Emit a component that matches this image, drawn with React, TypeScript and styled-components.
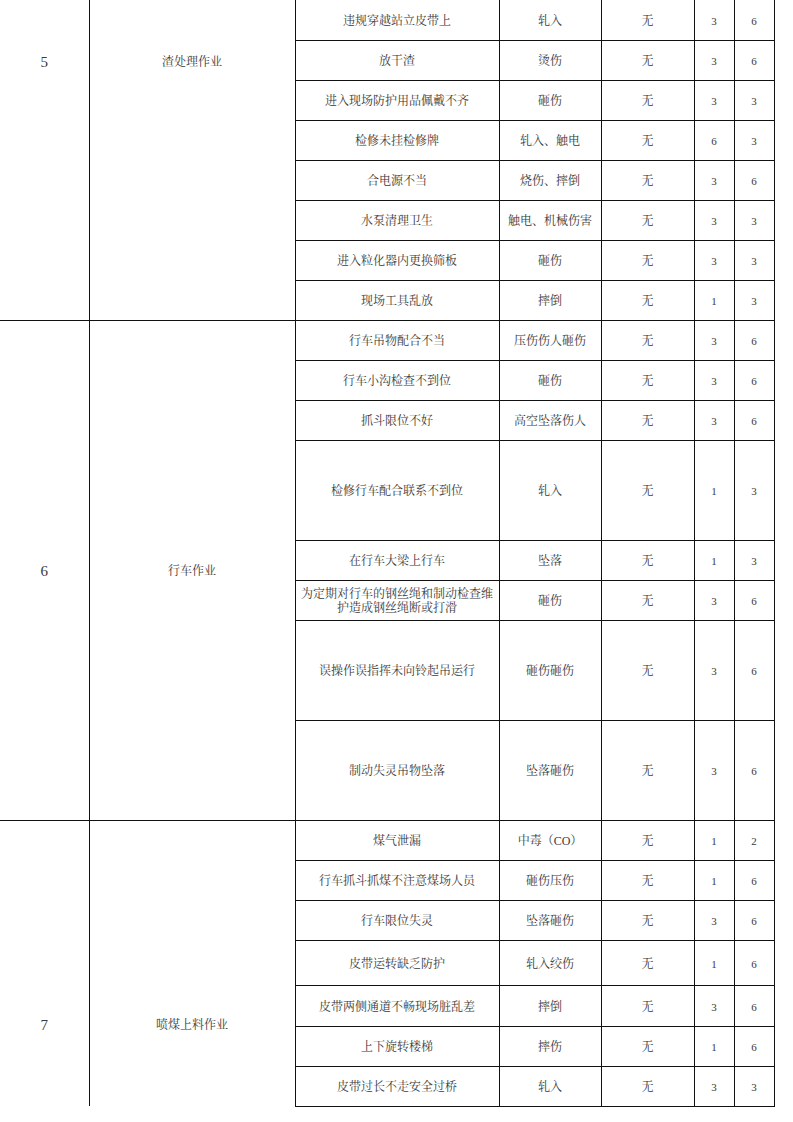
import React from "react";
import styled, { createGlobalStyle } from "styled-components";

const GlobalStyle = createGlobalStyle`
  html, body { margin: 0; padding: 0; background: #fff; }
  body {
    width: 793px;
    height: 1122px;
    overflow: hidden;
    font-family: "Liberation Serif", "Noto Serif CJK SC", "Noto Sans CJK SC", serif;
  }
`;

const Page = styled.div`
  width: 793px;
  height: 1122px;
  overflow: hidden;
  background: #fff;
`;

const Table = styled.table`
  border-collapse: collapse;
  table-layout: fixed;
  width: 774px;
  color: #3a3a3a;
`;

const Col = styled.col<{ $w: number }>`
  width: ${(p) => p.$w}px;
`;

const Row = styled.tr<{ $h: number }>`
  height: ${(p) => p.$h}px;
`;

const Cell = styled.td<{ $noTop?: boolean }>`
  border: 1px solid #111;
  ${(p) => (p.$noTop ? "border-top: none;" : "")}
  text-align: center;
  vertical-align: middle;
  padding: 2px 4px 0;
  font-size: 12px;
  line-height: 14px;
  font-family: "Liberation Serif", "Noto Serif CJK SC", "Noto Sans CJK SC", serif;
  word-break: break-all;
`;

const NumCell = styled(Cell)`
  font-size: 11px;
  padding: 2px 0 0;
`;

const GroupCell = styled(Cell)<{ $top?: number; $last?: boolean }>`
  vertical-align: ${(p) => (p.$top !== undefined ? "top" : "middle")};
  padding-top: ${(p) => (p.$top !== undefined ? `${p.$top}px` : "2px")};
  ${(p) => (p.$last ? "border-bottom: none;" : "")}
`;

const IndexCell = styled(GroupCell)`
  border-left: none;
  font-size: 15px;
  line-height: 18px;
`;

type Item = [string, string, string, number, number, number];

type Group = {
  no: string;
  name: string;
  top?: number;
  first?: boolean;
  last?: boolean;
  items: Item[];
};

const groups: Group[] = [
  {
    no: "5",
    name: "渣处理作业",
    top: 53,
    first: true,
    items: [
      ["违规穿越站立皮带上", "轧入", "无", 3, 6, 40],
      ["放干渣", "烫伤", "无", 3, 6, 40],
      ["进入现场防护用品佩戴不齐", "砸伤", "无", 3, 3, 40],
      ["检修未挂检修牌", "轧入、触电", "无", 6, 3, 40],
      ["合电源不当", "烧伤、摔倒", "无", 3, 6, 40],
      ["水泵清理卫生", "触电、机械伤害", "无", 3, 3, 40],
      ["进入粒化器内更换筛板", "砸伤", "无", 3, 3, 40],
      ["现场工具乱放", "摔倒", "无", 1, 3, 40],
    ],
  },
  {
    no: "6",
    name: "行车作业",
    items: [
      ["行车吊物配合不当", "压伤伤人砸伤", "无", 3, 6, 40],
      ["行车小沟检查不到位", "砸伤", "无", 3, 6, 40],
      ["抓斗限位不好", "高空坠落伤人", "无", 3, 6, 40],
      ["检修行车配合联系不到位", "轧入", "无", 1, 3, 100],
      ["在行车大梁上行车", "坠落", "无", 1, 3, 40],
      ["为定期对行车的钢丝绳和制动检查维护造成钢丝绳断或打滑", "砸伤", "无", 3, 6, 40],
      ["误操作误指挥未向铃起吊运行", "砸伤砸伤", "无", 3, 6, 100],
      ["制动失灵吊物坠落", "坠落砸伤", "无", 3, 6, 100],
    ],
  },
  {
    no: "7",
    name: "喷煤上料作业",
    top: 195,
    last: true,
    items: [
      ["煤气泄漏", "中毒（CO）", "无", 1, 2, 40],
      ["行车抓斗抓煤不注意煤场人员", "砸伤压伤", "无", 1, 6, 40],
      ["行车限位失灵", "坠落砸伤", "无", 3, 6, 40],
      ["皮带运转缺乏防护", "轧入绞伤", "无", 1, 6, 45],
      ["皮带两侧通道不畅现场脏乱差", "摔倒", "无", 3, 6, 41],
      ["上下旋转楼梯", "摔伤", "无", 1, 6, 40],
      ["皮带过长不走安全过桥", "轧入", "无", 3, 3, 40],
    ],
  },
];

const widths = [89, 206, 204, 102, 93, 40, 40];

export default function App() {
  return (
    <Page>
      <GlobalStyle />
      <Table>
        <colgroup>
          {widths.map((w, i) => (
            <Col key={i} $w={w} />
          ))}
        </colgroup>
        <tbody>
          {groups.map((g) =>
            g.items.map((it, i) => {
              const noTop = !!g.first && i === 0;
              return (
                <Row key={`${g.no}-${i}`} $h={it[5]}>
                  {i === 0 && (
                    <>
                      <IndexCell
                        rowSpan={g.items.length}
                        $top={g.top}
                        $noTop={g.first}
                        $last={g.last}
                      >
                        {g.no}
                      </IndexCell>
                      <GroupCell
                        rowSpan={g.items.length}
                        $top={g.top !== undefined ? g.top + 2 : undefined}
                        $noTop={g.first}
                        $last={g.last}
                      >
                        {g.name}
                      </GroupCell>
                    </>
                  )}
                  <Cell $noTop={noTop}>{it[0]}</Cell>
                  <Cell $noTop={noTop}>{it[1]}</Cell>
                  <Cell $noTop={noTop}>{it[2]}</Cell>
                  <NumCell $noTop={noTop}>{it[3]}</NumCell>
                  <NumCell $noTop={noTop}>{it[4]}</NumCell>
                </Row>
              );
            })
          )}
        </tbody>
      </Table>
    </Page>
  );
}
